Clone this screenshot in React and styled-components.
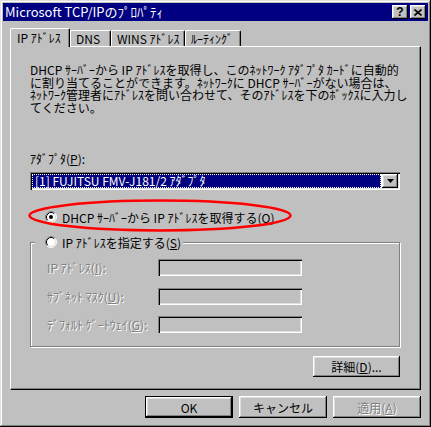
import React from 'react'
import styled, { createGlobalStyle } from 'styled-components'

const GlobalStyle = createGlobalStyle`
  html, body {
    margin: 0;
    padding: 0;
    background: #c0c0c0;
  }
  body {
    font-family: "Noto Sans CJK JP", "Noto Sans", sans-serif;
    font-size: 12px;
    color: #000;
  }
`

const raised = `
  box-shadow: inset -1px -1px 0 #000, inset 1px 1px 0 #fff,
    inset -2px -2px 0 #808080, inset 2px 2px 0 #dfdfdf;
`

const sunken = `
  box-shadow: inset 1px 1px 0 #808080, inset 2px 2px 0 #000,
    inset -1px -1px 0 #fff, inset -2px -2px 0 #dfdfdf;
`

const Window = styled.div`
  position: relative;
  width: 431px;
  height: 427px;
  box-sizing: border-box;
  padding: 3px;
  display: flex;
  flex-direction: column;
  background: #c0c0c0;
  box-shadow: inset -1px -1px 0 #000, inset 1px 1px 0 #dfdfdf,
    inset -2px -2px 0 #808080, inset 2px 2px 0 #fff;
`

const TitleBar = styled.div`
  height: 18px;
  display: flex;
  align-items: center;
  padding: 0 2px 0 2px;
  background: #000080;
  color: #fff;
`

const TitleText = styled.div`
  flex: 1;
  font-size: 13px;
  line-height: 18px;
  white-space: nowrap;
`

const CaptionButton = styled.div`
  width: 16px;
  height: 14px;
  margin-left: 2px;
  display: flex;
  align-items: center;
  justify-content: center;
  background: #c0c0c0;
  color: #000;
  font-family: "Liberation Sans", sans-serif;
  font-weight: bold;
  font-size: 12px;
  line-height: 14px;
  ${raised}
`

const Body = styled.div`
  flex: 1;
  display: flex;
  flex-direction: column;
  padding: 7px 7px 0 7px;
`

const TabStrip = styled.div`
  height: 18px;
  display: flex;
  align-items: flex-start;
  position: relative;
  z-index: 1;
`

const Tab = styled.div`
  box-sizing: border-box;
  width: ${p => p.$w}px;
  height: ${p => (p.$active ? 19 : 16)}px;
  margin-top: ${p => (p.$active ? 0 : 2)}px;
  padding-left: ${p => (p.$active ? 6 : 5)}px;
  display: flex;
  align-items: center;
  background: #c0c0c0;
  border-top: 1px solid #fff;
  border-left: 1px solid #fff;
  border-right: 1px solid #000;
  border-radius: 2px 2px 0 0;
  box-shadow: inset -1px 0 0 #808080;
  white-space: nowrap;
  line-height: 14px;
`

const Panel = styled.div`
  height: 344px;
  box-sizing: border-box;
  display: flex;
  flex-direction: column;
  padding: 17px 20px 0 19px;
  border-top: 1px solid #fff;
  border-left: 1px solid #fff;
  border-right: 1px solid #000;
  border-bottom: 1px solid #000;
  box-shadow: inset -1px -1px 0 #808080;
`

const Description = styled.div`
  line-height: 12.5px;
  white-space: nowrap;
`

const Label = styled.div`
  margin-top: 38px;
  line-height: 13px;
`

const Combo = styled.div`
  margin-top: 7px;
  height: 18px;
  box-sizing: border-box;
  padding: 2px;
  display: flex;
  background: #fff;
  ${sunken}
`

const ComboValue = styled.div`
  flex: 1;
  box-sizing: border-box;
  margin-right: 1px;
  padding-left: 2px;
  background: #000080;
  color: #fff;
  border: 1px dotted #fff;
  line-height: 12px;
  white-space: nowrap;
`

const DropButton = styled.div`
  width: 16px;
  height: 14px;
  display: flex;
  align-items: center;
  justify-content: center;
  background: #c0c0c0;
  ${raised}
`

const RadioRow = styled.div`
  height: 16px;
  margin-top: ${p => p.$top || 0}px;
  padding-left: ${p => p.$indent || 0}px;
  display: flex;
  align-items: center;
  gap: 5px;
  white-space: nowrap;
`

const GroupBox = styled.fieldset`
  margin: 9px 0 0 0;
  padding: 0 0 13px 0;
  min-width: 0;
  border: 1px solid #808080;
  box-shadow: 1px 1px 0 #fff, inset 1px 1px 0 #fff;
`

const Legend = styled.legend`
  margin-left: 4px;
  padding: 0 2px 0 10px;
  height: 16px;
  background: #c0c0c0;
`

const Fields = styled.div`
  margin-top: 9px;
  padding-left: 16px;
  display: flex;
  flex-direction: column;
  gap: 11.5px;
`

const FieldRow = styled.div`
  display: flex;
  align-items: center;
  height: 17px;
`

const Disabled = styled.span`
  color: #808080;
  text-shadow: 1px 1px 0 #fff;
  white-space: nowrap;
`

const FieldLabel = styled(Disabled)`
  width: 111px;
`

const TextBox = styled.div`
  width: 144px;
  height: 17px;
  box-sizing: border-box;
  background: #c0c0c0;
  ${sunken}
`

const Button = styled.div`
  box-sizing: border-box;
  width: ${p => p.$w || 88}px;
  height: ${p => p.$h || 22}px;
  display: flex;
  align-items: center;
  justify-content: center;
  background: #c0c0c0;
  white-space: nowrap;
  border: ${p => (p.$default ? '1px solid #000' : 'none')};
  ${raised}
`

const DetailsButton = styled(Button)`
  align-self: flex-end;
  margin-top: 9px;
`

const ButtonRow = styled.div`
  margin-top: 6px;
  display: flex;
  justify-content: flex-end;
  gap: 6px;
`

const Annotation = styled.svg`
  position: absolute;
  left: 0;
  top: 0;
  pointer-events: none;
`

const Radio = ({ checked }) => (
  <svg width="12" height="12" viewBox="0 0 12 12">
    <circle cx="6" cy="6" r="5" fill="#fff" />
    <path d="M2.11 9.89 A5.5 5.5 0 0 1 9.89 2.11" stroke="#808080" fill="none" />
    <path d="M2.11 9.89 A5.5 5.5 0 0 0 9.89 2.11" stroke="#fff" fill="none" />
    <path d="M2.82 9.18 A4.5 4.5 0 0 1 9.18 2.82" stroke="#000" fill="none" />
    <path d="M2.82 9.18 A4.5 4.5 0 0 0 9.18 2.82" stroke="#dfdfdf" fill="none" />
    {checked && <circle cx="6" cy="6" r="2" fill="#000" />}
  </svg>
)

const tabs = [
  { label: 'IP ｱﾄﾞﾚｽ', w: 60, active: true },
  { label: 'DNS', w: 41 },
  { label: 'WINS ｱﾄﾞﾚｽ', w: 74 },
  { label: 'ﾙｰﾃｨﾝｸﾞ', w: 56 },
]

const fields = [
  { name: 'IP ｱﾄﾞﾚｽ', key: 'I' },
  { name: 'ｻﾌﾞﾈｯﾄ ﾏｽｸ', key: 'U' },
  { name: 'ﾃﾞﾌｫﾙﾄ ｹﾞｰﾄｳｪｲ', key: 'G' },
]

export default function App() {
  return (
    <Window>
      <GlobalStyle />
      <TitleBar>
        <TitleText>Microsoft TCP/IPのﾌﾟﾛﾊﾟﾃｨ</TitleText>
        <CaptionButton>?</CaptionButton>
        <CaptionButton>
          <svg width="8" height="7" viewBox="0 0 8 7">
            <path d="M0.5 0.5 L7.5 6.5 M7.5 0.5 L0.5 6.5" stroke="#000" strokeWidth="1.6" />
          </svg>
        </CaptionButton>
      </TitleBar>

      <Body>
        <TabStrip>
          {tabs.map(t => (
            <Tab key={t.label} $w={t.w} $active={t.active}>{t.label}</Tab>
          ))}
        </TabStrip>

        <Panel>
          <Description>
            DHCP ｻｰﾊﾞｰから IP ｱﾄﾞﾚｽを取得し、このﾈｯﾄﾜｰｸ ｱﾀﾞﾌﾟﾀ ｶｰﾄﾞに自動的<br />
            に割り当てることができます。ﾈｯﾄﾜｰｸに DHCP ｻｰﾊﾞｰがない場合は、<br />
            ﾈｯﾄﾜｰｸ管理者にｱﾄﾞﾚｽを問い合わせて、そのｱﾄﾞﾚｽを下のﾎﾞｯｸｽに入力し<br />
            てください。
          </Description>

          <Label>ｱﾀﾞﾌﾟﾀ(<u>P</u>):</Label>
          <Combo>
            <ComboValue>[1] FUJITSU FMV-J181/2 ｱﾀﾞﾌﾟﾀ</ComboValue>
            <DropButton>
              <svg width="7" height="4" viewBox="0 0 7 4">
                <path d="M0 0 H7 L3.5 4 Z" fill="#000" />
              </svg>
            </DropButton>
          </Combo>

          <RadioRow $top={19} $indent={15}>
            <Radio checked />
            <span>DHCP ｻｰﾊﾞｰから IP ｱﾄﾞﾚｽを取得する(<u>O</u>)</span>
          </RadioRow>

          <GroupBox>
            <Legend>
              <RadioRow>
                <Radio />
                <span>IP ｱﾄﾞﾚｽを指定する(<u>S</u>)</span>
              </RadioRow>
            </Legend>
            <Fields>
              {fields.map(f => (
                <FieldRow key={f.key}>
                  <FieldLabel>{f.name}(<u>{f.key}</u>):</FieldLabel>
                  <TextBox />
                </FieldRow>
              ))}
            </Fields>
          </GroupBox>

          <DetailsButton $w={87} $h={21}>詳細(<u>D</u>)...</DetailsButton>
        </Panel>

        <ButtonRow>
          <Button $default>OK</Button>
          <Button>キャンセル</Button>
          <Button><Disabled>適用(<u>A</u>)</Disabled></Button>
        </ButtonRow>
      </Body>

      <Annotation width="431" height="427" viewBox="0 0 431 427">
        <ellipse cx="160" cy="215.5" rx="130.5" ry="15" fill="none" stroke="#ff0000" strokeWidth="2.5" />
      </Annotation>
    </Window>
  )
}
